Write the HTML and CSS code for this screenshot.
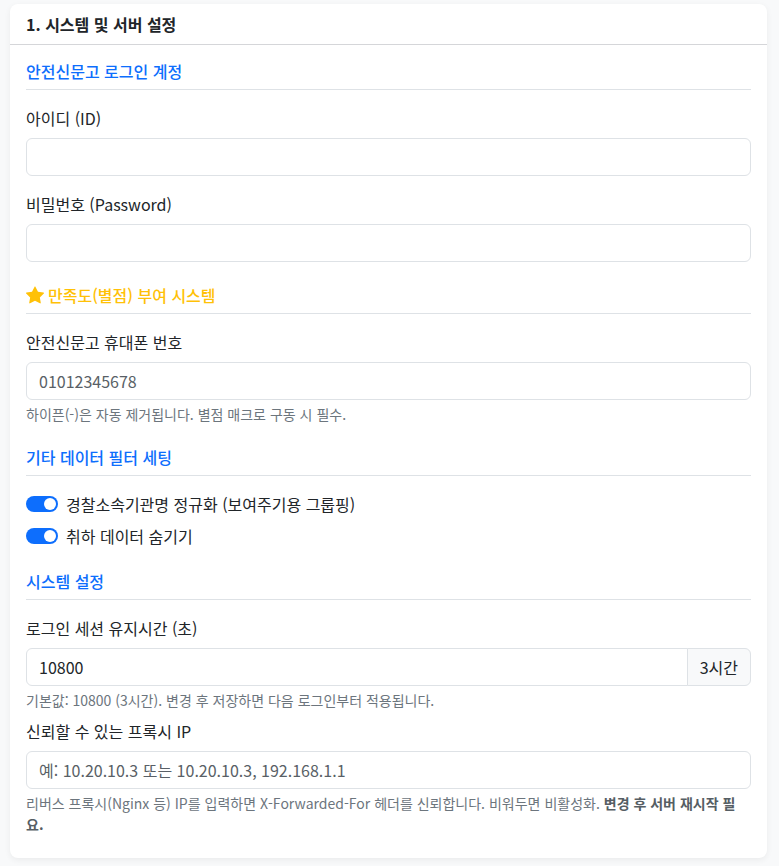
FILE: index.html
```html
<!DOCTYPE html>
<html lang="ko">
	<head>
		<meta charset="UTF-8">
		<title>시스템 및 서버 설정</title>
		<link rel="stylesheet" href="styles.css">
	</head>
	<body>
		<div class="card">
			<div class="card-header">1. 시스템 및 서버 설정</div>
			<div class="card-body">
				<h6 class="section-title first">안전신문고 로그인 계정</h6>
				<div class="field">
					<label class="field-label">아이디 (ID)</label>
					<input class="field-input" type="text">
				</div>
				<div class="field">
					<label class="field-label">비밀번호 (Password)</label>
					<input class="field-input" type="password">
				</div>

				<h6 class="section-title gold">
					<svg class="star" viewBox="0 0 16 16" width="18" height="18"><path d="M3.612 15.443c-.386.198-.824-.149-.746-.592l.83-4.73L.173 6.765c-.329-.314-.158-.888.283-.95l4.898-.696L7.538.792c.197-.39.73-.39.927 0l2.184 4.327 4.898.696c.441.062.612.636.282.95l-3.522 3.356.83 4.73c.078.443-.36.79-.746.592L8 13.187l-4.389 2.256z"/></svg>
					만족도(별점) 부여 시스템
				</h6>
				<div class="field">
					<label class="field-label">안전신문고 휴대폰 번호</label>
					<input class="field-input" type="text" placeholder="01012345678">
					<div class="help">하이픈(-)은 자동 제거됩니다. 별점 매크로 구동 시 필수.</div>
				</div>

				<h6 class="section-title after-help">기타 데이터 필터 세팅</h6>
				<div class="switch-row">
					<span class="switch"></span>
					<span>경찰소속기관명 정규화 (보여주기용 그룹핑)</span>
				</div>
				<div class="switch-row">
					<span class="switch"></span>
					<span>취하 데이터 숨기기</span>
				</div>

				<h6 class="section-title">시스템 설정</h6>
				<div class="field tight">
					<label class="field-label">로그인 세션 유지시간 (초)</label>
					<div class="input-group">
						<input class="field-input" type="text" value="10800">
						<span class="addon">3시간</span>
					</div>
					<div class="help">기본값: 10800 (3시간). 변경 후 저장하면 다음 로그인부터 적용됩니다.</div>
				</div>
				<div class="field tight">
					<label class="field-label">신뢰할 수 있는 프록시 IP</label>
					<input class="field-input" type="text" placeholder="예: 10.20.10.3 또는 10.20.10.3, 192.168.1.1">
					<div class="help">리버스 프록시(Nginx 등) IP를 입력하면 X-Forwarded-For 헤더를 신뢰합니다. 비워두면 비활성화. <strong>변경 후 서버 재시작 필요.</strong></div>
				</div>
			</div>
		</div>
	</body>
</html>
```

FILE: styles.css
```css
*{
	box-sizing: border-box;
}
body{
	margin: 0;
	padding: 4px 12px 7px 10px;
	background: #f8f9fa;
	color: #212529;
	font-family: "Noto Sans CJK KR", "Noto Sans", sans-serif;
	font-size: 16px;
	line-height: 1.5;
}
.card{
	background: #fff;
	border-radius: 8px;
	box-shadow: 0 2px 6px rgba(0,0,0,.06);
}
.card-header{
	height: 41px;
	padding: 0 16px;
	border-bottom: 1px solid #d5d6d9;
	font-size: 16px;
	font-weight: 700;
	line-height: 41px;
}
.card-body{
	padding: 16px 16px 15.5px;
}
/* margins collapse with the 16px under a field, so 24px here */
.section-title{
	display: flex;
	align-items: center;
	gap: 4px;
	margin: 24px 0 16px;
	padding-bottom: 8px;
	border-bottom: 1px solid #dee2e6;
	color: #0d6efd;
	font-size: 16px;
	font-weight: 500;
	line-height: 19.2px;
}
.section-title.first{
	margin-top: .6px;
}
.section-title.after-help{
	margin-top: 22.5px;
}
.section-title.gold{
	color: #ffc107;
}
.star{
	fill: #ffc107;
}
.field{
	margin-bottom: 16px;
}
.field.tight{
	margin-bottom: 8px;
}
.field-label{
	display: block;
	margin-bottom: 8px;
}
.field-input{
	display: block;
	width: 100%;
	height: 38px;
	padding: 6px 12px;
	border: 1px solid #dee2e6;
	border-radius: 6px;
	background: #fff;
	color: #212529;
	font: inherit;
}
.field-input::placeholder{
	color: #595f66;
	opacity: 1;
}
.help{
	margin-top: 4px;
	color: #6c757d;
	font-size: 14px;
	line-height: 21px;
}
.help strong{
	font-weight: 700;
	color: #565e64;
}
.input-group{
	display: flex;
}
.input-group .field-input{
	flex: 1;
	border-radius: 6px 0 0 6px;
}
.addon{
	display: flex;
	align-items: center;
	margin-left: -1px;
	padding: 0 12px;
	border: 1px solid #dee2e6;
	border-radius: 0 6px 6px 0;
	background: #f8f9fa;
}
.switch-row{
	display: flex;
	align-items: center;
	gap: 8px;
	height: 24px;
	margin-bottom: 8px;
}
.switch{
	position: relative;
	width: 32px;
	height: 16px;
	border-radius: 8px;
	background: #0d6efd;
}
.switch::after{
	content: "";
	position: absolute;
	top: 2px;
	right: 2px;
	width: 12px;
	height: 12px;
	border-radius: 50%;
	background: #fff;
}
```
